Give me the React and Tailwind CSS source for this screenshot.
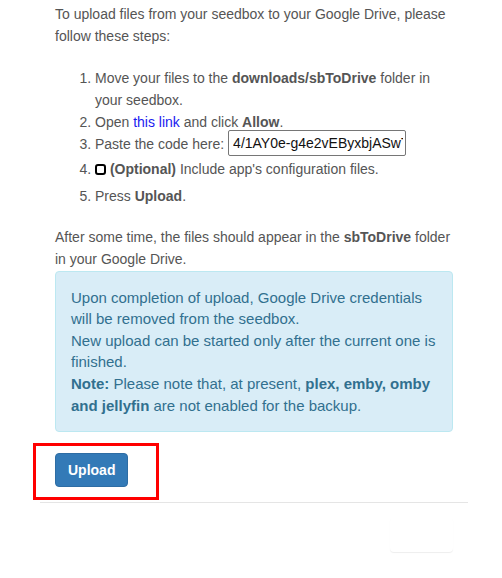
export default function App() {
  return (
    <div className="w-[502px] h-[578px] bg-white font-['Liberation_Sans',Arial,sans-serif] text-[14px] leading-[21.7px] text-[#555]">
      <div className="ml-[40px] w-[428px] pt-[4px]">
        <div className="px-[15px]">
          <p>
            To upload files from your seedbox to your Google Drive, please
            follow these steps:
          </p>

          <ol className="list-decimal pl-[40px] mt-[21px] mb-[20px]">
            <li>
              Move your files to the <b>downloads/sbToDrive</b> folder in your
              seedbox.
            </li>
            <li className="h-[22px]">
              Open{" "}
              <a href="#" className="text-[#1a1af0]">
                this link
              </a>{" "}
              and click <b>Allow</b>.
            </li>
            <li className="h-[25px]">
              Paste the code here:{" "}
              <input
                readOnly
                value="4/1AY0e-g4e2vEByxbjASwTqL0m9"
                className="inline-block w-[178px] h-[26px] align-middle -mt-[4px] border border-[#767676] rounded-[2px] pl-[4px] pr-[2px] text-[14px] text-[#111] bg-white outline-none"
              />
            </li>
            <li className="pb-[5px]">
              <span className="inline-block w-[11px] h-[11px] border-2 border-black rounded-[3px] align-[-1px]" />{" "}
              <b>(Optional)</b> Include app's configuration files.
            </li>
            <li>
              Press <b>Upload</b>.
            </li>
          </ol>

          <p>
            After some time, the files should appear in the <b>sbToDrive</b>{" "}
            folder in your Google Drive.
          </p>

          <div className="border border-[#bce8f1] bg-[#d9edf7] text-[#31708f] text-[15px] leading-[21.6px] rounded-[4px] p-[15px]">
            <p>
              Upon completion of upload, Google Drive credentials will be
              removed from the seedbox.
            </p>
            <p>New upload can be started only after the current one is finished.</p>
            <p>
              <b>Note:</b> Please note that, at present,{" "}
              <b>plex, emby, omby and jellyfin</b> are not enabled for the
              backup.
            </p>
          </div>

          <div className="-ml-[22px] mt-[11px] w-[126px] h-[57px] border-[3px] border-[#ff0000] pl-[19px] pt-[7px]">
            <button className="h-[34px] px-[12px] rounded-[4px] border border-[#2e6da4] bg-[#337ab7] text-white font-bold text-[14px] leading-[20px]">
              Upload
            </button>
          </div>
        </div>

        <div className="mt-[2px] h-px bg-[#e5e5e5]" />

        <div className="px-[15px] mt-[15px] flex justify-end">
          <div className="w-[63px] h-[34px] rounded-[4px] bg-white shadow-[0_1px_1px_rgba(0,0,0,0.07)]" />
        </div>
      </div>
    </div>
  );
}
